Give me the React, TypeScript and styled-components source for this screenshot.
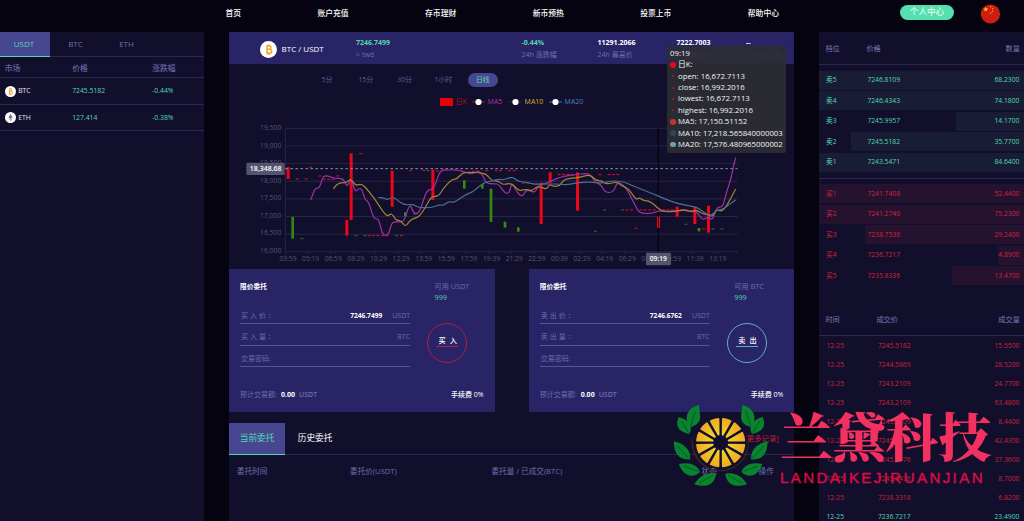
import React from 'react';
import styled, { createGlobalStyle } from 'styled-components';

const c = {
  page: '#04030f',
  panel: '#120f2d',
  card: '#282466',
  line: '#2a284c',
  active: '#464790',
  teal: '#52d8af',
  muted: '#7b78b8',
  faint: '#706dae',
  red: '#d4243a',
};

const Global = createGlobalStyle`
  * { box-sizing: border-box; }
  body { margin: 0; background: ${c.page}; overflow: hidden; }
  body, text { font-family: "Open Sans", "Noto Sans CJK SC", sans-serif; }
`;

const Page = styled.div`
  position: relative;
  width: 1024px;
  height: 521px;
  overflow: hidden;
  background: ${c.page};
  color: #fff;
  font-size: 7.2px;
  line-height: 12px;
  white-space: nowrap;
`;

const TopBar = styled.header`
  display: flex;
  height: 32px;
  padding-left: 225.5px;
`;
const Nav = styled.nav`
  display: flex;
  gap: 76.4px;
  padding-top: 7px;
  font-size: 7.8px;
  font-weight: 500;
  width: 554px;
`;
const UserButton = styled.div`
  margin: 5px 0 0 120.5px;
  width: 54px;
  height: 15px;
  border-radius: 8px;
  background: #55dfae;
  font-size: 8.6px;
  line-height: 15px;
  text-align: center;
`;
const FlagIcon = styled.svg`
  margin: 4px 0 0 27px;
  width: 20px;
  height: 20px;
`;

const Columns = styled.main`
  display: grid;
  grid-template-columns: 204px 565.2px 205px;
  column-gap: 25.1px;
  height: 489px;
`;
const Panel = styled.section`
  background: ${c.panel};
  min-width: 0;
`;

const MarketTabs = styled.div`
  display: flex;
  height: 25px;
  border-bottom: 1px solid ${c.line};
`;
const MarketTab = styled.div<{ $active?: boolean }>`
  width: ${p => (p.$active ? 50 : 51)}px;
  height: 25px;
  padding-right: ${p => (p.$active ? 2 : 0)}px;
  line-height: 24px;
  text-align: center;
  font-size: 8px;
  color: ${p => (p.$active ? c.teal : c.faint)};
  background: ${p => (p.$active ? c.active : 'transparent')};
  border-bottom: ${p => (p.$active ? `1px solid ${c.teal}` : 'none')};
`;
const MarketRow = styled.div<{ $head?: boolean }>`
  display: grid;
  grid-template-columns: 67.5px 80px 1fr;
  align-items: center;
  height: ${p => (p.$head ? 21 : 26.5)}px;
  padding: 1px 0 0 4.7px;
  font-size: ${p => (p.$head ? 7.8 : 6.8)}px;
  color: ${p => (p.$head ? c.muted : c.teal)};
  border-bottom: 1px solid ${c.line};
`;
const Coin = styled.div`
  display: flex;
  align-items: center;
  gap: 2.5px;
  color: #e5e4f3;
`;

const PairBar = styled.div`
  display: flex;
  height: 32px;
  background: ${c.card};
`;
const PairName = styled.div`
  display: flex;
  align-items: center;
  gap: 4.5px;
  width: 127px;
  padding: 2px 0 0 31px;
  font-size: 8px;
`;
const Stat = styled.div<{ $w: number; $green?: boolean }>`
  width: ${p => p.$w}px;
  padding-top: 4.5px;
  color: ${c.faint};
  font-size: 7px;
  b {
    display: block;
    font-size: 7px;
    color: ${p => (p.$green ? c.teal : '#fff')};
  }
`;

const ChartArea = styled.div`
  height: 205px;
  padding-top: 9px;
`;
const Periods = styled.div`
  display: flex;
  height: 14px;
  margin-left: 78.5px;
`;
const Period = styled.div<{ $active?: boolean }>`
  width: ${p => (p.$active ? 30 : 38.8)}px;
  height: 14px;
  margin-left: ${p => (p.$active ? 5 : 0)}px;
  line-height: 14px;
  text-align: center;
  font-size: 6.9px;
  border-radius: 7px;
  color: ${p => (p.$active ? c.teal : '#5f5c98')};
  background: ${p => (p.$active ? c.active : 'transparent')};
`;
const Legend = styled.div`
  display: flex;
  align-items: center;
  height: 14px;
  margin: 8px 0 0 210.5px;
  font-size: 7px;
`;
const LegendItem = styled.div<{ $color: string; $w: number }>`
  display: flex;
  align-items: center;
  gap: 3px;
  width: ${p => p.$w}px;
  color: ${p => p.$color};
  svg { width: 13px; height: 8px; }
`;
const ChartSvg = styled.svg`
  display: block;
  width: 566px;
  height: 151px;
  margin-top: 9px;
`;
const Tooltip = styled.div`
  position: absolute;
  left: 667px;
  top: 45.5px;
  width: 119px;
  height: 107px;
  padding: 2.4px 0 0 3px;
  border-radius: 2px;
  background: rgba(44, 44, 52, 0.92);
  color: #f2f2f5;
  font-size: 7.8px;
  line-height: 11.38px;
`;
const TipRow = styled.div`
  display: flex;
  align-items: center;
`;
const TipDot = styled.i<{ $color: string; $small?: boolean }>`
  width: ${p => (p.$small ? 2 : 5.5)}px;
  height: ${p => (p.$small ? 2 : 5.5)}px;
  margin: ${p => (p.$small ? '0 4.3px 0 1.7px' : '0 2.5px 0 0')};
  border-radius: 50%;
  background: ${p => p.$color};
`;

const Orders = styled.div`
  display: flex;
  justify-content: space-between;
  height: 143px;
`;
const OrderCard = styled.div`
  display: grid;
  grid-template-columns: 170px 1fr;
  grid-template-rows: 22px 84px 1fr;
  width: 265.5px;
  padding: 11.5px 11px 0;
  background: ${c.card};
`;
const OrderTitle = styled.div`
  font-size: 6.7px;
  font-weight: 700;
`;
const Available = styled.div`
  padding-left: 24.5px;
  line-height: 11px;
  color: ${c.faint};
  div { color: ${c.teal}; }
`;
const Field = styled.div`
  display: flex;
  align-items: center;
  height: 21.6px;
  padding: 5.5px 0 0 1px;
  border-bottom: 1px solid #57549a;
  color: ${c.faint};
  font-size: 7px;
`;
const FieldLabel = styled.span<{ $spread?: boolean }>`
  flex: 1;
  letter-spacing: ${p => (p.$spread ? 2 : 0)}px;
`;
const FieldValue = styled.b`
  color: #fff;
  font-size: 6.6px;
  margin-right: 10px;
`;
const RoundButton = styled.div<{ $color: string }>`
  width: 40px;
  height: 40px;
  margin: 20px 0 0 17px;
  padding: 12px 0 0 8px;
  border: 1px solid ${p => p.$color};
  border-radius: 50%;
  font-weight: 500;
  font-size: 7.2px;
`;
const ButtonLabel = styled.div<{ $color: string }>`
  width: 22px;
  height: 11px;
  padding-left: 2.5px;
  line-height: 9px;
  letter-spacing: 4px;
  border-bottom: 1px solid ${p => p.$color};
`;
const OrderFoot = styled.div`
  grid-column: 1 / -1;
  display: flex;
  gap: 4px;
  padding-top: 2px;
  color: ${c.faint};
  font-size: 7px;
  b { color: #fff; }
  span:nth-child(3) { font-weight: 600; }
  span:last-child { margin-left: auto; color: #fff; font-weight: 500; }
`;

const HistoryTabs = styled.div`
  display: flex;
  height: 32px;
  margin-top: 11px;
  border-bottom: 1px solid ${c.line};
`;
const HistoryTab = styled.div<{ $active?: boolean }>`
  width: ${p => (p.$active ? 56 : 60)}px;
  height: 32px;
  line-height: 31px;
  text-align: center;
  font-size: 8.7px;
  color: ${p => (p.$active ? c.teal : '#fff')};
  background: ${p => (p.$active ? c.active : 'transparent')};
  border-bottom: ${p => (p.$active ? `1px solid ${c.teal}` : 'none')};
`;
const MoreLink = styled.div`
  margin: 9px 15.5px 0 auto;
  font-size: 7.4px;
  color: #c4202f;
`;
const HistoryHead = styled.div`
  display: grid;
  grid-template-columns: 113px 141.5px 210px 57px 1fr;
  padding: 9.5px 0 0 8px;
  font-size: 7.6px;
  color: ${c.faint};
`;

const BookHead = styled.div<{ $trades?: boolean }>`
  display: grid;
  grid-template-columns: ${p => (p.$trades ? '51px' : '41px')} 1fr auto;
  align-items: center;
  height: 33px;
  padding: 0 4.5px 0 6px;
  font-size: 7.2px;
  color: ${c.muted};
  border-bottom: 1px solid ${c.line};
`;
const BookSide = styled.div<{ $sell?: boolean }>`
  display: grid;
  gap: 1.5px;
  padding: ${p => (p.$sell ? '5.5px 0 6px' : '5.5px 0 18px')};
  border-bottom: ${p => (p.$sell ? `1px solid ${c.line}` : 'none')};
  color: ${p => (p.$sell ? c.teal : c.red)};
`;
const BookRow = styled.div<{ $from: number; $sell?: boolean }>`
  display: grid;
  grid-template-columns: 41.5px 1fr auto;
  align-items: center;
  height: 19px;
  padding: 0 5px 0 6.5px;
  font-size: 6.75px;
  background: linear-gradient(
    to right,
    transparent ${p => p.$from}px,
    ${p => (p.$sell ? '#181d35' : '#24122f')} ${p => p.$from}px
  );
`;
const TradeRow = styled.div<{ $up?: boolean }>`
  display: grid;
  grid-template-columns: 51.5px 1fr auto;
  align-items: center;
  height: 19px;
  padding: 0 5px 0 7px;
  font-size: 6.75px;
  color: ${p => (p.$up ? c.teal : '#cb2339')};
`;

const Watermark = styled.div`
  position: absolute;
  left: 672px;
  top: 404px;
  display: flex;
  opacity: 0.95;
`;
const BrandText = styled.div`
  margin-left: 10px;
  color: #ff3364;
`;
const BrandName = styled.div`
  height: 63px;
  font: 900 52.8px/60px "Noto Serif CJK SC", "Noto Sans CJK SC", serif;
`;
const BrandLatin = styled.div`
  font: 500 15px/22px "Liberation Sans", sans-serif;
  letter-spacing: 2.45px;
  color: #e50b48;
  -webkit-text-stroke: 0.4px #e50b48;
`;

function BtcIcon({ size }: { size: number }) {
  return (
    <svg width={size} height={size} viewBox="0 0 16 16">
      <circle cx="8" cy="8" r="8" fill="#fff" />
      <path d="M6 4.6h2.7c2.2 0 2.2 3.2 0 3.2H6.4h2.8c2.4 0 2.4 3.6 0 3.6H5.8M6.6 4.6v6.8M7.3 3.2v1.4M8.9 3.2v1.4M7.3 11.4v1.5M8.9 11.4v1.5" fill="none" stroke="#f2a52c" strokeWidth="1.4" />
    </svg>
  );
}

function EthIcon() {
  return (
    <svg width="11" height="11" viewBox="0 0 16 16">
      <circle cx="8" cy="8" r="8" fill="#fff" />
      <path d="M8 2.5L11 8 8 10 5 8z" fill="#77799b" />
      <path d="M5 9l3 1.8L11 9 8 13.5z" fill="#8c8eae" />
    </svg>
  );
}

const star = (x: number, y: number, r: number) =>
  Array.from({ length: 10 }, (_, i) => {
    const a = (i * Math.PI) / 5 - Math.PI / 2;
    const d = i % 2 ? r * 0.42 : r;
    return `${x + d * Math.cos(a)},${y + d * Math.sin(a)}`;
  }).join(' ');

function Flag() {
  return (
    <FlagIcon viewBox="0 0 20 20">
      <circle cx="9.5" cy="10" r="9.6" fill="#cf1d14" />
      <polygon points={star(4.8, 5.4, 2.6)} fill="#fc0" />
      <polygon points={star(9.6, 2.8, 1)} fill="#fc0" />
      <polygon points={star(11.6, 4.6, 1)} fill="#fc0" />
      <polygon points={star(11.5, 7.2, 1)} fill="#fc0" />
      <polygon points={star(9.6, 9.1, 1)} fill="#fc0" />
    </FlagIcon>
  );
}

const ma5 = '212,240 219,222 225,205 238,204 244,185 250,168 262,167 275,172 290,176 300,174 312,180 320,200 328,186 336,180 345,217 358,204 366,208 375,240 387,246 400,295 412,296 418,305 428,346 445,346 455,308 468,305 480,306 492,304 505,262 512,256 522,282 535,280 545,258 555,225 565,208 580,208 592,175 603,149 630,150 655,150 680,158 695,163 715,152 728,165 738,190 765,192 775,192 795,220 808,220 815,187 830,215 846,232 858,210 870,212 885,218 898,193 920,190 940,180 960,172 980,167 1000,165 1020,162 1050,160 1065,188 1082,192 1095,217 1120,218 1132,185 1145,192 1160,207 1172,230 1185,255 1198,281 1240,280 1255,272 1310,274 1330,270 1355,275 1370,275 1380,290 1390,300 1405,290 1417,302 1430,262 1442,262 1450,255 1460,215 1472,180 1480,140 1487,113';
const ma10 = '280,207 290,192 305,188 318,188 333,176 347,198 365,190 385,212 410,245 440,292 455,278 468,302 482,300 496,322 510,300 525,295 540,288 560,255 575,228 595,230 610,205 635,178 650,178 667,158 690,157 715,158 740,162 755,183 775,182 788,195 815,188 835,212 850,210 862,208 875,213 890,200 905,202 920,208 928,192 940,200 960,197 970,180 990,175 1020,172 1050,163 1068,182 1085,182 1100,193 1130,185 1145,198 1165,205 1188,240 1198,232 1210,242 1230,243 1260,270 1275,276 1310,274 1330,268 1350,275 1370,270 1385,280 1405,285 1417,290 1430,268 1445,275 1460,258 1487,207';
const ma20 = '415,232 430,233 442,240 460,230 480,248 500,255 520,253 535,263 560,263 580,262 595,254 610,257 625,244 640,248 660,236 680,222 700,215 718,198 735,187 760,182 775,177 790,180 805,174 820,172 835,185 860,187 885,193 910,192 935,192 960,192 980,195 1010,188 1050,186 1090,190 1110,183 1145,183 1180,198 1210,210 1240,222 1270,235 1310,250 1350,258 1370,262 1390,275 1410,290 1430,270 1450,268 1465,255 1487,240';

/* Rounds the corners of a polyline by curving through segment midpoints. */
const smooth = (points: string) => {
  const p = points.split(' ').map(s => s.split(',').map(Number));
  let d = `M${p[0][0]} ${p[0][1]}`;
  for (let i = 1; i < p.length - 1; i++) {
    d += `Q${p[i][0]} ${p[i][1]} ${(p[i][0] + p[i + 1][0]) / 2} ${(p[i][1] + p[i + 1][1]) / 2}`;
  }
  const e = p[p.length - 1];
  return `${d}L${e[0]} ${e[1]}`;
};

const redBars = [[144, 141, 177], [320, 300, 347], [333, 100, 300], [456, 152, 260], [578, 149, 240], [903, 188, 312], [930, 157, 188], [1012, 157, 272], [1255, 289, 324], [1311, 260, 290], [1364, 260, 312], [1405, 257, 338]];
const greenBars = [[158, 291, 356], [496, 277, 289], [673, 181, 206], [727, 193, 206], [753, 206, 306], [795, 305, 323], [835, 322, 335], [1377, 324, 334]];
const redTicks = [[171, 176], [198, 176], [211, 141], [239, 167], [252, 177], [266, 177], [279, 177], [293, 167], [362, 100], [387, 346], [400, 346], [413, 346], [427, 346], [441, 346], [484, 346], [511, 151], [551, 150], [592, 152], [700, 153], [713, 153], [740, 151], [768, 151], [781, 151], [808, 151], [822, 151], [850, 188], [863, 188], [890, 191], [957, 163], [970, 163], [983, 163], [997, 163], [1079, 163], [1107, 163], [1120, 163], [1133, 163], [1160, 269], [1174, 269], [1187, 324], [1201, 269], [1215, 269], [1229, 269], [1242, 269], [1269, 269], [1283, 269], [1297, 269], [1324, 269], [1338, 269], [1391, 326]];
const greenTicks = [[185, 355], [306, 177], [347, 346], [374, 346], [469, 346], [564, 151], [524, 281], [1066, 333], [1093, 269], [1147, 269], [1337, 312], [1418, 326], [1445, 326]];
const times = ['03:59', '05:19', '06:59', '08:29', '10:29', '12:29', '13:59', '15:59', '17:59', '19:39', '21:29', '22:59', '00:39', '02:29', '04:19', '06:29', '08:09', '09:59', '11:39', '13:19'];

function Chart() {
  return (
    <ChartSvg viewBox="-33 -6 1698 453">
      {Array.from({ length: 8 }, (_, i) => (
        <g key={i}>
          <path d={`M136 ${25 + i * 52.9}H1493`} stroke="#27254a" strokeWidth="3" />
          <text x="124" y={30 + i * 52.6} textAnchor="end" fontSize="20.5" fill="#56536f">
            {(19500 - i * 500).toLocaleString('en-US')}
          </text>
        </g>
      ))}
      <path d="M136 25V396" stroke="#27254a" strokeWidth="3" />
      {Array.from({ length: 21 }, (_, i) => (
        <path key={i} d={`M${136 + i * 67.8} 396v7`} stroke="#27254a" strokeWidth="3" />
      ))}
      {times.map((t, i) => (
        <text key={t} x={144 + i * 67.85} y="422" textAnchor="middle" fontSize="20" fill="#56536f">{t}</text>
      ))}
      <path d="M1255 25V396" stroke="#05040f" strokeWidth="4" />
      {redBars.map(([x, a, b]) => <rect key={x} x={x - 4} y={a} width="9" height={b - a} fill="#ec0718" />)}
      {greenBars.map(([x, a, b]) => <rect key={x} x={x - 4} y={a} width="8" height={b - a} fill="#2f8a14" />)}
      {redTicks.map(([x, y]) => <rect key={`${x}-${y}`} x={x - 4} y={y - 1} width="9" height="3.5" fill="#bd102c" />)}
      {greenTicks.map(([x, y]) => <rect key={`${x}-${y}`} x={x - 4} y={y - 1} width="9" height="3.5" fill="#2a6420" />)}
      <path d={smooth(ma5)} fill="none" stroke="#a032a6" strokeWidth="3.6" />
      <path d={smooth(ma10)} fill="none" stroke="#a0872f" strokeWidth="3.6" />
      <path d={smooth(ma20)} fill="none" stroke="#4b6f8f" strokeWidth="3.6" />
      <path d="M1255 285V330" stroke="#05040f" strokeWidth="2" />
      <path d="M136 146H1493" stroke="#8c8a9c" strokeWidth="3" strokeDasharray="8 7" />
      <rect x="19" y="128" width="115" height="37" rx="4" fill="#54546e" />
      <text x="77" y="153" textAnchor="middle" fontSize="21" fontWeight="600" fill="#fff">18,348.68</text>
      <rect x="1218" y="398" width="75" height="38" rx="4" fill="#54546e" />
      <text x="1255" y="423" textAnchor="middle" fontSize="20" fontWeight="600" fill="#fff">09:19</text>
    </ChartSvg>
  );
}

function LegendMark({ color }: { color: string }) {
  return (
    <svg viewBox="0 0 13 8">
      <path d="M0 4h13" stroke={color} />
      <circle cx="6.5" cy="4" r="3.1" fill="#fff" />
    </svg>
  );
}

interface OrderProps {
  verb: string;
  coin: string;
  price: string;
  color: string;
}
function Order({ verb, coin, price, color }: OrderProps) {
  return (
    <OrderCard>
      <OrderTitle>限价委托</OrderTitle>
      <Available>可用 {coin}<div>999</div></Available>
      <div>
        <Field><FieldLabel $spread>{verb}价：</FieldLabel><FieldValue>{price}</FieldValue>USDT</Field>
        <Field><FieldLabel $spread>{verb}量：</FieldLabel>BTC</Field>
        <Field><FieldLabel>交易密码:</FieldLabel></Field>
      </div>
      <RoundButton $color={color}><ButtonLabel $color={color}>{verb}</ButtonLabel></RoundButton>
      <OrderFoot><span>预计交易额:</span><b>0.00</b><span>USDT</span><span>手续费 0%</span></OrderFoot>
    </OrderCard>
  );
}

const leaves = [
  'M118 30C114 50 138 84 91 96C66 66 88 35 118 30Z',
  'M56 66C86 74 101 94 88 117C54 110 45 92 56 66Z',
  'M41 139C70 145 92 162 91 193C53 196 42 172 41 139Z',
  'M57 207C86 200 112 208 120 231C97 253 68 241 57 207Z',
  'M103 268C118 242 142 231 168 236C164 270 137 279 103 268Z',
];
const veins = ['M106 49L92 92', 'M64 77L86 114', 'M52 153L86 189', 'M72 214L114 229', 'M118 264L160 241'];

function Wreath() {
  const at = (r: number, deg: number) => {
    const a = (deg * Math.PI) / 180;
    return `${182 + r * Math.cos(a)} ${143 + r * Math.sin(a)}`;
  };
  const side = (
    <>
      {leaves.map(d => <path key={d} d={d} fill="#078b2d" />)}
      {veins.map(d => <path key={d} d={d} stroke="#0b3b20" strokeWidth="2" />)}
    </>
  );
  return (
    <svg width="98" height="84" viewBox="36 27 294 252">
      <defs>
        <radialGradient id="peel" gradientUnits="userSpaceOnUse" cx="182" cy="143" r="76">
          <stop offset="0.2" stopColor="#ffe62c" />
          <stop offset="1" stopColor="#fbb020" />
        </radialGradient>
      </defs>
      <path d="M98 120A86 86 0 1 0 258 105C280 160 245 224 182 226C130 224 94 180 98 120Z" fill="#3c2722" />
      <circle cx="182" cy="143" r="79" fill="#120f2d" />
      {side}
      <g transform="translate(364 0) scale(-1 1)">{side}</g>
      {Array.from({ length: 12 }, (_, i) => (
        <path
          key={i}
          d={`M${at(25, i * 30 + 15)}L${at(71, i * 30 + 5.5)}A71 71 0 0 1 ${at(71, i * 30 + 24.5)}Z`}
          fill="url(#peel)"
          stroke="url(#peel)"
          strokeWidth="6"
          strokeLinejoin="round"
        />
      ))}
    </svg>
  );
}

const sells: [string, string, string, number][] = [
  ['卖5', '7246.8109', '68.2300', 0], ['卖4', '7246.4343', '74.1800', 0], ['卖3', '7245.9957', '14.1700', 137],
  ['卖2', '7245.5182', '35.7700', 32], ['卖1', '7243.5471', '84.6400', 0],
];
const buys: [string, string, string, number][] = [
  ['买1', '7241.7408', '52.4400', 0], ['买2', '7241.2740', '75.2300', 0], ['买3', '7238.7536', '29.2400', 46],
  ['买4', '7236.7217', '4.8900', 179], ['买5', '7235.8336', '13.4700', 133],
];
const trades = [
  ['7245.5182', '15.5500'], ['7244.5869', '28.5200'], ['7243.2109', '24.7700'], ['7243.2109', '63.4800'],
  ['7243.2109', '8.4400'], ['7245.7476', '42.4300'], ['7245.7476', '37.3600'], ['7245.7476', '8.7000'],
  ['7238.3318', '6.8200'], ['7236.7217', '23.4900'],
];
const tips: [string, string, boolean][] = [
  ['日K:', '#e30a17', false], ['open: 16,672.7113', '#c0101c', true], ['close: 16,992.2016', '#c0101c', true],
  ['lowest: 16,672.7113', '#c0101c', true], ['highest: 16,992.2016', '#c0101c', true],
  ['MA5: 17,150.51152', '#c23531', false], ['MA10: 17,218.565840000003', '#2f4554', false],
  ['MA20: 17,576.480965000002', '#6ba3aa', false],
];

export default function App() {
  return (
    <Page>
      <Global />
      <TopBar>
        <Nav>
          {['首页', '账户充值', '存币理财', '新币预热', '投票上币', '帮助中心'].map(t => <span key={t}>{t}</span>)}
        </Nav>
        <UserButton>个人中心</UserButton>
        <Flag />
      </TopBar>
      <Columns>
        <Panel>
          <MarketTabs>
            <MarketTab $active>USDT</MarketTab>
            <MarketTab>BTC</MarketTab>
            <MarketTab>ETH</MarketTab>
          </MarketTabs>
          <MarketRow $head><span>市场</span><span>价格</span><span>涨跌幅</span></MarketRow>
          <MarketRow><Coin><BtcIcon size={11} />BTC</Coin><span>7245.5182</span><span>-0.44%</span></MarketRow>
          <MarketRow><Coin><EthIcon />ETH</Coin><span>127.414</span><span>-0.38%</span></MarketRow>
        </Panel>

        <Panel>
          <PairBar>
            <PairName><BtcIcon size={17} />BTC / USDT</PairName>
            <Stat $w={165.5} $green><b>7246.7499</b>≈ twd</Stat>
            <Stat $w={76} $green><b>-0.44%</b>24h 涨跌幅</Stat>
            <Stat $w={79}><b>11291.2066</b>24h 最高价</Stat>
            <Stat $w={69.5}><b>7222.7003</b>24h 最低价</Stat>
            <Stat $w={40}><b>--</b>24h 成交量</Stat>
          </PairBar>
          <ChartArea>
            <Periods>
              {['5分', '15分', '30分', '1小时'].map(t => <Period key={t}>{t}</Period>)}
              <Period $active>日线</Period>
            </Periods>
            <Legend>
              <LegendItem $color="#b90c24" $w={32}>
                <svg viewBox="0 0 13 8"><rect width="13" height="8" rx="1" fill="#ec0008" /></svg>日K
              </LegendItem>
              <LegendItem $color="#b531b5" $w={37}><LegendMark color="#7d2235" />MA5</LegendItem>
              <LegendItem $color="#d6b32a" $w={40}><LegendMark color="#232b42" />MA10</LegendItem>
              <LegendItem $color="#4484c4" $w={40}><LegendMark color="#4a7b88" />MA20</LegendItem>
            </Legend>
            <Chart />
          </ChartArea>
          <Orders>
            <Order verb="买入" coin="USDT" price="7246.7499" color="#b01f42" />
            <Order verb="卖出" coin="BTC" price="7246.6762" color="#5fafc6" />
          </Orders>
          <HistoryTabs>
            <HistoryTab $active>当前委托</HistoryTab>
            <HistoryTab>历史委托</HistoryTab>
            <MoreLink>[更多记录]</MoreLink>
          </HistoryTabs>
          <HistoryHead>
            <span>委托时间</span><span>委托价(USDT)</span><span>委托量 / 已成交(BTC)</span><span>状态</span><span>操作</span>
          </HistoryHead>
        </Panel>

        <Panel>
          <BookHead><span>档位</span><span>价格</span><span>数量</span></BookHead>
          <BookSide $sell>
            {sells.map(([n, p, q, from]) => (
              <BookRow key={n} $from={from} $sell><span>{n}</span><span>{p}</span><span>{q}</span></BookRow>
            ))}
          </BookSide>
          <BookSide>
            {buys.map(([n, p, q, from]) => (
              <BookRow key={n} $from={from}><span>{n}</span><span>{p}</span><span>{q}</span></BookRow>
            ))}
          </BookSide>
          <BookHead $trades><span>时间</span><span>成交价</span><span>成交量</span></BookHead>
          {trades.map(([p, q], i) => (
            <TradeRow key={i} $up={i === 9}><span>12-25</span><span>{p}</span><span>{q}</span></TradeRow>
          ))}
        </Panel>
      </Columns>

      <Tooltip>
        <div>09:19</div>
        {tips.map(([label, color, small]) => (
          <TipRow key={label}><TipDot $color={color} $small={small} />{label}</TipRow>
        ))}
      </Tooltip>

      <Watermark>
        <Wreath />
        <BrandText>
          <BrandName>兰黛科技</BrandName>
          <BrandLatin>LANDAIKEJIRUANJIAN</BrandLatin>
        </BrandText>
      </Watermark>
    </Page>
  );
}
